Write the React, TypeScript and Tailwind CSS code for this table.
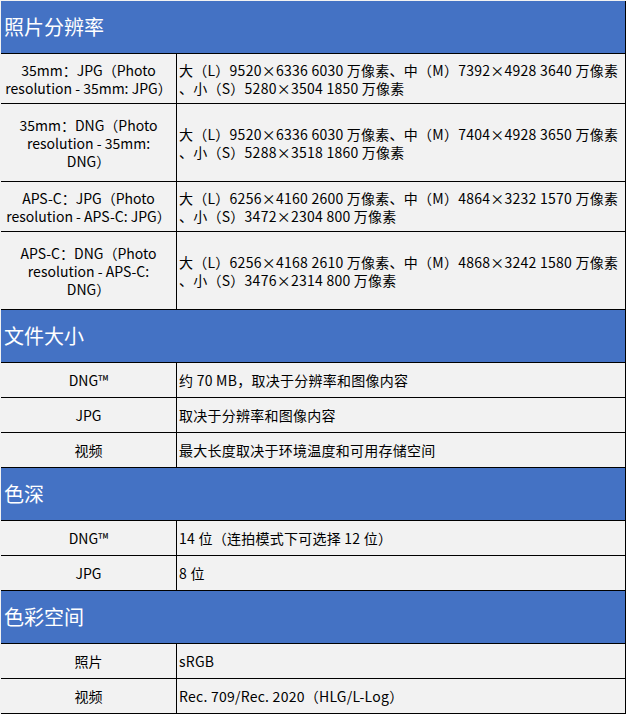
import React from 'react';

type Row = { label: React.ReactNode; value: React.ReactNode; h: string };
type Section = { title: string; rows: Row[] };

const lines = (...parts: string[]) =>
  parts.map((p, i) => (
    <span key={i} className="block whitespace-nowrap">
      {p}
    </span>
  ));

const SECTIONS: Section[] = [
  {
    title: '照片分辨率',
    rows: [
      {
        label: lines('35mm：JPG（Photo', 'resolution - 35mm: JPG）'),
        value: lines('大（L）9520×6336 6030 万像素、中（M）7392×4928 3640 万像素', '、小（S）5280×3504 1850 万像素'),
        h: 'h-[50px]',
      },
      {
        label: lines('35mm：DNG（Photo', 'resolution - 35mm:', 'DNG）'),
        value: lines('大（L）9520×6336 6030 万像素、中（M）7404×4928 3650 万像素', '、小（S）5288×3518 1860 万像素'),
        h: 'h-[78px]',
      },
      {
        label: lines('APS-C：JPG（Photo', 'resolution - APS-C: JPG）'),
        value: lines('大（L）6256×4160 2600 万像素、中（M）4864×3232 1570 万像素', '、小（S）3472×2304 800 万像素'),
        h: 'h-[50px]',
      },
      {
        label: lines('APS-C：DNG（Photo', 'resolution - APS-C:', 'DNG）'),
        value: lines('大（L）6256×4168 2610 万像素、中（M）4868×3242 1580 万像素', '、小（S）3476×2314 800 万像素'),
        h: 'h-[78px]',
      },
    ],
  },
  {
    title: '文件大小',
    rows: [
      { label: 'DNG™', value: '约 70 MB，取决于分辨率和图像内容', h: 'h-[35px]' },
      { label: 'JPG', value: '取决于分辨率和图像内容', h: 'h-[35px]' },
      { label: '视频', value: '最大长度取决于环境温度和可用存储空间', h: 'h-[35px]' },
    ],
  },
  {
    title: '色深',
    rows: [
      { label: 'DNG™', value: '14 位（连拍模式下可选择 12 位）', h: 'h-[35px]' },
      { label: 'JPG', value: '8 位', h: 'h-[35px]' },
    ],
  },
  {
    title: '色彩空间',
    rows: [
      { label: '照片', value: 'sRGB', h: 'h-[35px]' },
      { label: '视频', value: 'Rec. 709/Rec. 2020（HLG/L-Log）', h: 'h-[35px]' },
    ],
  },
];

export default function App() {
  return (
    <div
      className="w-[626px] h-[714px] bg-[#f2f2f2] pt-px pl-px text-black"
      style={{ fontFamily: '"Noto Sans CJK SC", "Noto Sans", sans-serif' }}
    >
      <div className="border-r border-b border-black">
        {SECTIONS.map((sec, si) => (
          <div key={sec.title}>
            {/* section header */}
            <div
              className={`flex items-center bg-[#4472c4] pl-[3px] text-[20px] text-white ${
                si === 0 ? 'h-[52px]' : 'h-[53px] border-t border-black'
              }`}
            >
              {sec.title}
            </div>
            {sec.rows.map((row, ri) => (
              <div key={ri} className={`flex border-t border-black ${row.h}`}>
                <div className="w-[175px] shrink-0 flex items-center justify-center text-center text-[14px] leading-[18px]">
                  <div>{row.label}</div>
                </div>
                <div className="flex-1 flex items-center border-l border-black pl-[2px] text-[14px] leading-[18px] tracking-[0.25px]">
                  <div>{row.value}</div>
                </div>
              </div>
            ))}
          </div>
        ))}
      </div>
    </div>
  );
}
